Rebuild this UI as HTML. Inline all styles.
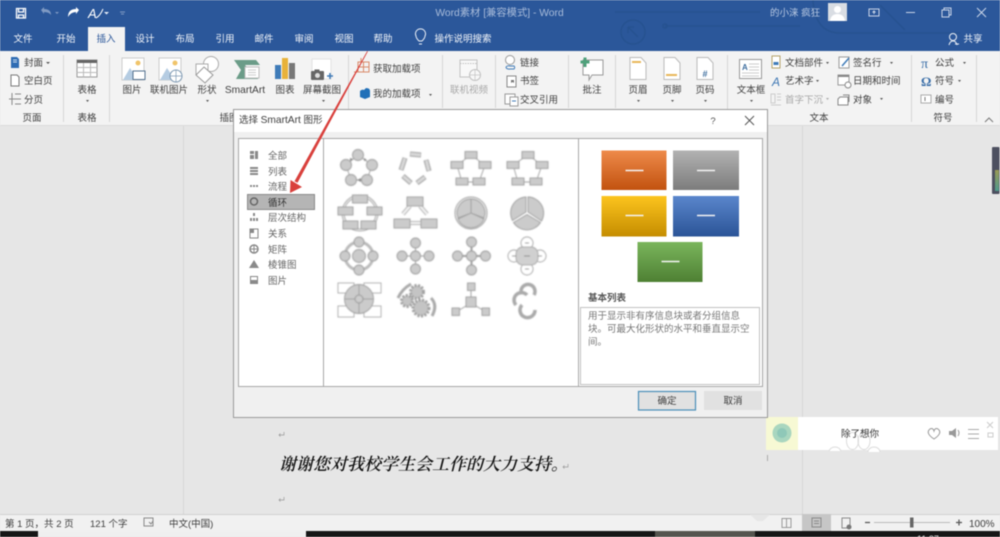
<!DOCTYPE html>
<html lang="zh"><head><meta charset="utf-8"><title>Word</title>
<style>
html,body{margin:0;padding:0;width:1000px;height:537px;overflow:hidden;background:#e6e6e6}
svg{display:block;filter:blur(.4px)}
text{font-family:"Liberation Sans","Noto Sans CJK SC",sans-serif;font-size:9.5px;fill:#3e3e3e}
.t{fill:#f2f5fa}
.m{text-anchor:middle}
.g{fill:#a8a8a8}
.d{fill:#555}
.l{fill:#666}
.s{fill:#cbcbcb;stroke:#9c9c9c;stroke-width:.9}
.n{fill:none;stroke:#a0a0a0;stroke-width:.9}
.i{fill:#fff;stroke:#999;stroke-width:.8}
</style></head><body>
<svg width="1000" height="537" viewBox="0 0 1000 537" xmlns="http://www.w3.org/2000/svg">
<defs>
<filter id="bl" x="-5%" y="-5%" width="110%" height="110%"><feGaussianBlur stdDeviation=".45"/></filter>
<linearGradient id="go" x1="0" y1="0" x2="0" y2="1"><stop offset="0" stop-color="#ee8a4a"/><stop offset="1" stop-color="#c2520f"/></linearGradient>
<linearGradient id="gg" x1="0" y1="0" x2="0" y2="1"><stop offset="0" stop-color="#b2b2b2"/><stop offset="1" stop-color="#7c7c7c"/></linearGradient>
<linearGradient id="gy" x1="0" y1="0" x2="0" y2="1"><stop offset="0" stop-color="#fcc41e"/><stop offset="1" stop-color="#c58d00"/></linearGradient>
<linearGradient id="gb" x1="0" y1="0" x2="0" y2="1"><stop offset="0" stop-color="#5a86cc"/><stop offset="1" stop-color="#2b5497"/></linearGradient>
<linearGradient id="gn" x1="0" y1="0" x2="0" y2="1"><stop offset="0" stop-color="#7ab55c"/><stop offset="1" stop-color="#4e8033"/></linearGradient>
<linearGradient id="gt" x1="0" y1="0" x2="0" y2="1"><stop offset="0" stop-color="#9a9a55"/><stop offset="1" stop-color="#4f9a8c"/></linearGradient>
</defs>

<rect width="1000" height="537" fill="#e6e6e6"/>
<!-- title bar -->
<rect width="1000" height="51" fill="#2b579a"/>
<g fill="none" stroke="#265290" stroke-width="1.500">
<path d="M615 12H760"/>
<circle cx="633" cy="32" r="12"/>
<path d="M628 27L638 37M628 27h6M628 27v6"/>
<path d="M665 26H800"/>
<path d="M813 0Q815 33 840 33H960"/>
<path d="M880 5L905 30"/>
<circle cx="665" cy="26" r="2"/>
</g>
<!-- QAT -->
<g fill="none" stroke="#fff" stroke-width="1.300">
<path d="M16.500 8.500H25.500V18H16.500Z"/><path d="M18.500 8.500V12H23.500V8.500M18.500 18V15H23.500V18"/>
</g>
<path d="M41 10L44 7V9Q51 9 51 15Q49 12 44 12V14Z" fill="#7f9ac3"/>
<path d="M55 12l2 2 2-2" fill="#7f9ac3"/>
<path d="M79 10L76 7V9Q68 9 68 17Q71 12 76 12V14Z" fill="#fff"/>
<text x="88" y="18" style="font-size:13px;fill:#fff;font-style:italic">A</text>
<path d="M96 18Q100 16 103 9" stroke="#fff" fill="none"/>
<path d="M104 12h5l-2.500 2.500z" fill="#e8eef7"/>
<path d="M120 12h5M121 14h3" stroke="#7f9ac3" fill="none"/>
<text class="m" x="499.500" y="16" style="fill:#a9bcda;font-size:10.300px">Word素材 [兼容模式] - Word</text>
<text x="770" y="16" style="fill:#b9c9e2">的小涞 疯狂</text>
<rect x="828" y="3" width="19" height="18" fill="#d9dde3"/>
<circle cx="837.500" cy="9.500" r="3.500" fill="#fff"/><path d="M830 21Q831 14 837.500 14Q844 14 845 21Z" fill="#fff"/>
<g fill="none" stroke="#c9d5e8" stroke-width="1">
<rect x="869" y="9" width="10" height="7"/><path d="M874 14V11M872.500 12.500L874 11L875.500 12.500"/>
<path d="M906 12.500H915"/>
<rect x="942" y="10" width="7" height="7"/><path d="M944 10V8H951V15H949"/>
<path d="M977 8L986 17M986 8L977 17"/>
</g>
<!-- tabs -->
<rect x="88" y="27" width="37" height="24" fill="#f3f3f3"/>
<g>
<text class="t m" x="23" y="42">文件</text>
<text class="t m" x="66" y="42">开始</text>
<text class="m" x="106" y="42" style="fill:#2b579a">插入</text>
<text class="t m" x="145" y="42">设计</text>
<text class="t m" x="185" y="42">布局</text>
<text class="t m" x="225" y="42">引用</text>
<text class="t m" x="264" y="42">邮件</text>
<text class="t m" x="304" y="42">审阅</text>
<text class="t m" x="344" y="42">视图</text>
<text class="t m" x="383" y="42">帮助</text>
<text class="t m" x="463" y="42">操作说明搜索</text>
<text class="t m" x="973" y="42">共享</text>
</g>
<g fill="none" stroke="#eef2f8" stroke-width="1">
<path d="M419 41Q416 38 416 36A5 5 0 1 1 425 36Q425 38 422 41ZM419 44H422"/>
<circle cx="953" cy="37" r="3.500"/><path d="M949 45Q950 41 953 41Q956 41 957 45M955 44h4"/>
</g>

<!-- ribbon -->
<rect y="51" width="1000" height="74" fill="#f3f3f3"/>
<rect y="125" width="1000" height="1" fill="#dcdcdc"/>
<g stroke="#d6d6d6" stroke-width="1">
<path d="M63.500 55V122M109.500 55V122M348.500 55V122M442.500 55V108M495.500 55V108M568.500 55V108M615.500 55V108M727.500 55V122M911.500 55V122M976.500 55V122"/>
</g>
<!-- page group -->
<path d="M11 57H17L19 59V68H11Z" fill="#2f6cb3"/><path d="M13 60h4M13 62h4" stroke="#cfe0f3"/>
<text x="24" y="66">封面</text><path d="M46 62h4l-2 2z" fill="#555"/>
<path d="M11 75H17L19 77V86H11Z" fill="#fff" stroke="#777"/>
<text x="24" y="84">空白页</text>
<path d="M12 93V105M9 99H21M15 94h6M15 104h6" fill="none" stroke="#888"/>
<text x="24" y="103">分页</text>
<text class="m" x="32" y="121">页面</text>
<!-- table -->
<rect x="77" y="60" width="20" height="17" fill="#fff" stroke="#999"/>
<rect x="77" y="60" width="20" height="3" fill="#666"/>
<path d="M77 67.500H97M77 72.500H97M83.500 63V77M90.500 63V77" stroke="#bbb"/>
<text class="m" x="87" y="93">表格</text><path d="M86 100h3l-1.500 2z" fill="#555"/>
<text class="m" x="87" y="121">表格</text>
<!-- picture -->
<rect x="122" y="58" width="22" height="22" fill="#fff" stroke="#ccc"/>
<circle cx="138" cy="63" r="2.500" fill="#f0c46a"/>
<path d="M123 80L130 68L138 80Z" fill="#b5cce2"/>
<rect x="133" y="71" width="12" height="8.500" fill="#fff" stroke="#53718f"/>
<text class="m" x="132" y="93">图片</text>
<rect x="159" y="58" width="22" height="22" fill="#fff" stroke="#ccc"/>
<circle cx="175" cy="63" r="2.500" fill="#f0c46a"/>
<path d="M160 80L167 68L175 80Z" fill="#b5cce2"/>
<circle cx="176" cy="76" r="6" fill="#fff" stroke="#7d98b2"/><path d="M170 76h12M176 70v12" stroke="#7d98b2" stroke-width=".7"/>
<text class="m" x="169" y="93">联机图片</text>
<circle cx="211" cy="64" r="7.500" fill="#fff" stroke="#aaa"/>
<path d="M196 64H208V74H196Z" fill="#fff" stroke="#aaa"/>
<path d="M204 67L213 75L205 83L196 75Z" fill="#fff" stroke="#999"/>
<text class="m" x="207" y="93">形状</text><path d="M206 100h3l-1.500 2z" fill="#555"/>
<path d="M234 60H256L260 65H245L250 71L246 77H258V79H236L241 70Z" fill="#6b9c88"/>
<rect x="245" y="67" width="14" height="11" fill="#fff" stroke="#bbb"/>
<path d="M248 70h8M248 72.500h8M248 75h8" stroke="#ccc"/>
<text class="m" x="245" y="93" style="font-size:10.200px">SmartArt</text>
<rect x="275" y="65" width="6" height="14" fill="#3f7bb8"/>
<rect x="282" y="58" width="6" height="21" fill="#e8b23a"/>
<rect x="289" y="63" width="6" height="16" fill="#777"/>
<text class="m" x="285" y="93">图表</text>
<rect x="312" y="59" width="19" height="20" fill="#fff" stroke="#e2e2e2"/>
<rect x="311" y="71" width="13" height="9" rx="1" fill="#666"/><circle cx="317.500" cy="75.500" r="2.500" fill="#ddd"/><rect x="314.500" y="69.500" width="5" height="2" fill="#666"/>
<path d="M327 76h6M330 73v6" stroke="#3f7bb8" stroke-width="1.500"/>
<text class="m" x="322" y="93">屏幕截图</text><path d="M322 100h3l-1.500 2z" fill="#555"/>
<text class="m" x="229" y="121">插图</text>
<!-- addins -->
<path d="M358 72V62H369V72ZM363.500 62V72M358 67H369M354 72H358M361 58V62" fill="none" stroke="#d98a6a"/>
<text x="373" y="72">获取加载项</text>
<path d="M360 91Q362 89 364 90L366 88Q370 88 370 91V97L365 99L360 97Z" fill="#2170b8"/>
<text x="373" y="97">我的加载项</text><path d="M429 94h3l-1.500 2z" fill="#555"/>
<!-- video -->
<rect x="460" y="60" width="17" height="17" fill="#f8f8f8" stroke="#c2c2c2"/><path d="M460 63.500h17" stroke="#c2c2c2" stroke-dasharray="1.500 1"/>
<circle cx="475" cy="75" r="5.500" fill="#f8f8f8" stroke="#c2c2c2"/><path d="M469.500 75h11M475 69.500v11" stroke="#c2c2c2" stroke-width=".7"/>
<text class="m g" x="469" y="93">联机视频</text>
<!-- links -->
<circle cx="510" cy="60" r="4.500" fill="#fff" stroke="#999"/><path d="M506 67a3 2 0 0 1 4-1h4a2 2 0 0 1 0 3h-4a3 2 0 0 1-4-2" fill="none" stroke="#3f7bb8"/>
<text x="520" y="66">链接</text>
<rect x="507" y="76" width="9" height="11" fill="#fff" stroke="#888"/><path d="M511 80h3v3l-1.500-1-1.500 1z" fill="#777"/>
<text x="520" y="84">书签</text>
<rect x="505" y="94" width="10" height="10" fill="#fff" stroke="#999"/><rect x="510" y="97" width="8" height="9" fill="#fff" stroke="#999"/><path d="M512 101h4" stroke="#3f7bb8"/>
<text x="520" y="103">交叉引用</text>
<!-- comment -->
<path d="M583 60H603V75H592L589 80V75H583Z" fill="#fff" stroke="#999"/>
<path d="M585 57.500V67M580.500 62H589.500" stroke="#4fa17b" stroke-width="3"/>
<text class="m" x="592" y="93">批注</text>
<!-- header/footer -->
<path d="M630 57.500H641L646 63V79.500H630Z" fill="#fff" stroke="#bbb"/><rect x="632" y="61" width="9" height="2" fill="#e8b75a"/>
<text class="m" x="638" y="93">页眉</text><path d="M637 100h3l-1.500 2z" fill="#555"/>
<path d="M664 57.500H675L680 63V79.500H664Z" fill="#fff" stroke="#bbb"/><rect x="666" y="74" width="11" height="2" fill="#e8b75a"/>
<text class="m" x="672" y="93">页脚</text><path d="M671 100h3l-1.500 2z" fill="#555"/>
<path d="M697 57.500H708L713 63V79.500H697Z" fill="#fff" stroke="#bbb"/>
<text class="m" x="705" y="77" style="fill:#3f6f9f;font-size:9px;font-weight:bold">#</text>
<text class="m" x="705" y="93">页码</text><path d="M704 100h3l-1.500 2z" fill="#555"/>
<!-- textbox -->
<rect x="739.500" y="59.500" width="22" height="19" fill="#fff" stroke="#999"/>
<text x="742" y="70" style="font-size:8px;font-weight:bold;fill:#3f6f9f">A</text>
<path d="M749 64h10M749 67h10M749 70h10M742 73h17M742 76h17" stroke="#ccc"/>
<text class="m" x="751" y="93">文本框</text><path d="M750 100h3l-1.500 2z" fill="#555"/>
<rect x="772" y="56" width="8" height="12" fill="#fff" stroke="#b5a26a"/><rect x="773.500" y="62" width="5" height="3" fill="#3f7bb8"/>
<text x="785" y="66">文档部件</text><path d="M826 62h3l-1.500 2z" fill="#555"/>
<text x="772" y="86" style="font-size:12px;font-style:italic;fill:#3f78b4">A</text>
<text x="785" y="84">艺术字</text><path d="M816 80h3l-1.500 2z" fill="#555"/>
<path d="M771 94h4v9h-4zM777 94h4M777 97h4M777 100h4M771 105h10" fill="none" stroke="#ccc"/>
<text x="785" y="103" class="g">首字下沉</text><path d="M826 98h3l-1.500 2z" fill="#aaa"/>
<rect x="839" y="57" width="10" height="11" fill="#fff" stroke="#999"/><path d="M842 66L849 58" stroke="#3f7bb8" stroke-width="1.500"/>
<text x="853" y="66">签名行</text><path d="M890 62h3l-1.500 2z" fill="#555"/>
<rect x="838" y="75" width="11" height="10" fill="#fff" stroke="#999"/><rect x="838" y="75" width="11" height="2" fill="#888"/><circle cx="848" cy="85" r="3" fill="#fff" stroke="#888"/>
<text x="853" y="84">日期和时间</text>
<path d="M840 97h8v8h-10v-6z" fill="#fff" stroke="#888"/><path d="M843 95h6v7" fill="none" stroke="#888"/>
<text x="853" y="103">对象</text><path d="M880 98h3l-1.500 2z" fill="#555"/>
<text class="m" x="819" y="121">文本</text>
<text x="921" y="68" style="font-size:14px;fill:#3a6ea8;font-family:'Liberation Serif',serif">π</text>
<text x="935" y="66">公式</text><path d="M963 62h3l-1.500 2z" fill="#555"/>
<text x="921" y="86" style="font-size:13px;font-weight:bold;fill:#3a6ea8;font-family:'Liberation Serif',serif">Ω</text>
<text x="935" y="84">符号</text><path d="M958 80h3l-1.500 2z" fill="#555"/>
<rect x="921" y="95" width="10" height="8" fill="#fff" stroke="#aaa"/><path d="M925 97v4" stroke="#777"/>
<text x="935" y="103">编号</text>
<text class="m" x="943" y="121">符号</text>
<path d="M985 122L989 118L993 122" fill="none" stroke="#777"/>

<!-- doc -->
<path d="M183.500 126V514M802.500 126V514" stroke="#d6d6d6"/>
<rect x="992" y="147" width="7.500" height="47" rx="1" fill="#4d5060"/>
<rect x="995" y="170" width="4" height="21" fill="url(#gt)"/>
<text x="279" y="470" style="font-family:'Liberation Serif','Noto Serif CJK SC',serif;font-size:17px;font-style:italic;font-weight:600;fill:#111">谢谢您对我校学生会工作的大力支持。</text>
<path d="M284 432V435H279M280.500 433.500L279 435L280.500 436.500M284 497V500H279M280.500 498.500L279 500L280.500 501.500M568 464V467H563M564.500 465.500L563 467L564.500 468.500" fill="none" stroke="#999" stroke-width=".7"/>

<!-- music widget -->
<rect x="766" y="417" width="232" height="33" fill="#fff"/>
<rect x="766" y="417" width="32" height="33" fill="#f7f9d4"/>
<circle cx="782" cy="433" r="9.500" fill="#a9d6bf"/><circle cx="782" cy="433" r="5" fill="#8fc8b8"/>
<g fill="#fff" stroke="#dcdcdc">
<path d="M829 451A6.500 6.500 0 0 1 841 451"/>
<ellipse cx="852.500" cy="441" rx="6" ry="8.500" fill="none"/><ellipse cx="864" cy="441" rx="6" ry="8.500" fill="none"/>
<path d="M868 452A6 5 0 0 1 880 452"/>
</g>
<text class="m" x="860" y="437" style="fill:#333">除了想你</text>
<path d="M934 439Q925 433 930 429Q933 427.500 934 431Q935 427.500 938 429Q943 433 934 439Z" fill="#fff" stroke="#999"/>
<path d="M949 431h3l4-3v10l-4-3h-3z" fill="#999"/><path d="M958 430q2 3 0 6" fill="none" stroke="#999"/>
<path d="M968 429.500h11M968 434h11M968 438.500h11" stroke="#aaa"/>
<path d="M987 422L993 428M993 422L987 428" stroke="#ccc"/>
<rect x="988" y="433" width="5" height="4" fill="none" stroke="#ccc"/>
<path d="M767.500 455V461" stroke="#aaa"/>

<!-- dialog -->
<rect x="233.500" y="109.500" width="534" height="308" fill="#f0f0f0" stroke="#9a9a9a"/>
<rect x="234" y="110" width="533" height="22" fill="#fff"/>
<text x="239" y="123">选择 <tspan style="font-size:10.200px">SmartArt</tspan> 图形</text>
<text class="m" x="713" y="124" style="fill:#555">?</text>
<path d="M745 116L754 125M754 116L745 125" stroke="#555" fill="none"/>
<rect x="238.500" y="138.500" width="524" height="248" fill="#fff" stroke="#a8a8a8"/>
<path d="M323.500 139V386M578.500 139V386" stroke="#a8a8a8"/>

<rect x="247.500" y="194.500" width="67" height="15" fill="#b5b5b5" stroke="#8a8a8a"/>
<text x="268" y="159" class="l">全部</text>
<text x="268" y="175" class="l">列表</text>
<text x="268" y="190" class="l">流程</text>
<text x="268" y="206" style="fill:#333">循环</text>
<text x="268" y="221" class="l">层次结构</text>
<text x="268" y="237" class="l">关系</text>
<text x="268" y="253" class="l">矩阵</text>
<text x="268" y="268" class="l">棱锥图</text>
<text x="268" y="284" class="l">图片</text>
<g fill="#8a8a8a">
<path d="M250 151h4v3h-4zM255 151h3v8h-3zM250 155h4v4h-4z"/>
<path d="M250 167h8v2h-8zM250 170h8v2h-8zM250 173h8v2h-8z"/>
<path d="M250 185h2v2h-2zM253 185h2v2h-2zM256 185h2v2h-2z"/>
<circle cx="254" cy="201.500" r="3.500" fill="none" stroke="#666" stroke-width="1.500"/>
<path d="M253 213h2v3h-2zM250 218h2v3h-2zM253 218h2v3h-2zM256 218h2v3h-2z"/>
<path d="M250 229h8v9h-8z" fill="none" stroke="#888"/><rect x="250" y="229" width="4" height="4"/>
<circle cx="254" cy="249" r="4" fill="none" stroke="#888" stroke-width="1.500"/><path d="M250 248.500h8v1h-8zM253.500 245h1v8h-1z"/>
<path d="M254 260L259 268H249Z"/>
<rect x="250.500" y="276.500" width="7" height="7" fill="#fff" stroke="#888"/><rect x="251" y="280" width="6" height="3"/>
</g>

<g filter="url(#bl)">
<!-- row 1 -->
<path d="M358 155L372 165L367 180H351L346 165Z" class="n"/>
<circle class="s" cx="358" cy="155" r="5.500"/><circle class="s" cx="372" cy="165" r="5.500"/><circle class="s" cx="367" cy="180" r="5.500"/><circle class="s" cx="351" cy="180" r="5.500"/><circle class="s" cx="346" cy="165" r="5.500"/>
<path d="M364 158l3 2-3 1zM350 158l3 1-3 2zM357 180l4-2v4z" fill="#888"/>
<g fill="none">
<g stroke="#a0a0a0" stroke-width="5"><path d="M410 154L421 155M426 160L429 171M425 177L417 183M411 183L403 176M401 170L405 158"/></g>
<g stroke="#d8d8d8" stroke-width="3"><path d="M410.500 154L420.500 155M426.300 160.500L428.700 170.500M424.600 177.300L417.400 182.700M410.600 182.600L403.400 176.400M401.200 169.500L404.800 158.500"/></g>
</g>
<path d="M471 155L485 165L479 182H462L457 165Z" class="n"/>
<rect class="s" x="465" y="151.500" width="12" height="7"/><rect class="s" x="479" y="161.500" width="12" height="7"/><rect class="s" x="473" y="178" width="12" height="7"/><rect class="s" x="456" y="178" width="12" height="7"/><rect class="s" x="451" y="161.500" width="12" height="7"/>
<path d="M528 155L542 165L536 182H518L513 165Z" class="n"/>
<rect class="s" x="522" y="151.500" width="12" height="7"/><rect class="s" x="536" y="161.500" width="12" height="7"/><rect class="s" x="530" y="178" width="12" height="7"/><rect class="s" x="512" y="178" width="12" height="7"/><rect class="s" x="507" y="161.500" width="12" height="7"/>
<!-- row 2 -->
<circle cx="360" cy="213" r="17" fill="none" stroke="#a0a0a0" stroke-width="3"/>
<circle cx="360" cy="213" r="17" fill="none" stroke="#e4e4e4" stroke-width="1.500"/>
<rect class="s" x="352.500" y="195" width="15" height="8"/><rect class="s" x="367" y="207" width="15" height="8"/><rect class="s" x="361" y="221" width="15" height="8"/><rect class="s" x="343" y="221" width="15" height="8"/><rect class="s" x="338" y="207" width="15" height="8"/>
<path d="M410 206L403 214M420 206L427 214M409 223H421" stroke="#a0a0a0" stroke-width="4" fill="none"/>
<path d="M410 206L403 214M420 206L427 214M409 223H421" stroke="#f0f0f0" stroke-width="2.500" fill="none"/>
<rect class="s" x="407" y="197" width="16" height="9"/><rect class="s" x="394" y="219" width="16" height="9"/><rect class="s" x="421" y="219" width="16" height="9"/>
<circle cx="471" cy="213" r="16" fill="#eee" stroke="#a0a0a0"/>
<path d="M471 213V199A14 14 0 0 1 484 218Z" class="s"/><path d="M471 213L484 219A14 14 0 0 1 458 219Z" class="s"/><path d="M471 213L458 218A14 14 0 0 1 471 199Z" class="s"/>
<path d="M528 212V197A16 16 0 0 1 541.500 221Z" class="s"/><path d="M527 214.500L540.500 222.500A16 16 0 0 1 513.500 222.500Z" class="s"/><path d="M526 212L512.500 220.500A16 16 0 0 1 526 197Z" class="s"/>
<!-- row 3 -->
<circle cx="359" cy="256" r="14" fill="none" stroke="#bcbcbc" stroke-width="3"/>
<circle class="s" cx="359" cy="256" r="6.500"/><circle class="s" cx="359" cy="242" r="5"/><circle class="s" cx="373" cy="256" r="5"/><circle class="s" cx="359" cy="270" r="5"/><circle class="s" cx="345" cy="256" r="5"/>
<path d="M415.500 243V268M402 256H429" stroke="#a0a0a0"/>
<circle class="s" cx="415.500" cy="256" r="5"/><circle class="s" cx="415.500" cy="243" r="5"/><circle class="s" cx="429" cy="256" r="5"/><circle class="s" cx="415.500" cy="269" r="5"/><circle class="s" cx="402" cy="256" r="5"/>
<path d="M471.500 242V270M458 256H486" stroke="#a0a0a0" stroke-width="2"/>
<circle class="s" cx="471.500" cy="256" r="5"/><circle class="s" cx="471.500" cy="242" r="5"/><circle class="s" cx="485.500" cy="256" r="5"/><circle class="s" cx="471.500" cy="270" r="5"/><circle class="s" cx="457.500" cy="256" r="5"/>
<circle class="n" style="fill:#fff" cx="527" cy="243" r="6"/><circle class="n" style="fill:#fff" cx="540" cy="256" r="6"/><circle class="n" style="fill:#fff" cx="527" cy="269" r="6"/><circle class="n" style="fill:#fff" cx="514" cy="256" r="6"/>
<rect x="516" y="247" width="22" height="18" rx="7" fill="#d0d0d0" stroke="#a8a8a8"/>
<path d="M524 256h6M525 243h4M525 269h4M512 256h4M538 256h4" stroke="#888"/>
<!-- row 4 -->
<rect class="i" x="338" y="283" width="16" height="10"/><rect class="i" x="364" y="283" width="17" height="10"/><rect class="i" x="338" y="306" width="16" height="11"/><rect class="i" x="364" y="306" width="17" height="11"/>
<circle class="s" cx="359" cy="299" r="14.500"/><path d="M359 284.500V313.500M344.500 299H373.500" stroke="#a0a0a0"/><circle cx="359" cy="299" r="4" fill="#ccc" stroke="#999"/>
<circle cx="417" cy="292" r="6.500" fill="#c4c4c4" stroke="#a0a0a0" stroke-width="3" stroke-dasharray="2 1.500"/>
<circle cx="407" cy="301" r="5.500" fill="#c4c4c4" stroke="#a0a0a0" stroke-width="3" stroke-dasharray="2 1.500"/>
<circle cx="421" cy="308" r="8" fill="#c4c4c4" stroke="#a0a0a0" stroke-width="3" stroke-dasharray="2 1.500"/>
<path d="M398 298Q402 289 411 284M431 298Q438 305 432 316" fill="none" stroke="#aaa" stroke-width="3"/>
<path d="M471 287V303M471 303L456 312M471 303L486 312" stroke="#a0a0a0"/>
<rect class="s" x="467.500" y="283" width="7.500" height="7.500"/><rect class="s" x="466" y="297" width="10" height="10"/><rect class="s" x="452" y="308" width="7.500" height="7.500"/><rect class="s" x="482" y="308" width="7.500" height="7.500"/>
<path d="M521 291A7 7 0 1 1 534 295M516 305A7 7 0 0 1 527 295M522 305A7.500 7.500 0 1 0 535 310" fill="none" stroke="#aaa" stroke-width="3.500"/>
</g>

<!-- preview -->
<rect x="601.500" y="150.500" width="65" height="39.500" fill="url(#go)"/>
<rect x="673" y="150.500" width="66" height="39.500" fill="url(#gg)"/>
<rect x="601.500" y="196" width="65" height="40.500" fill="url(#gy)"/>
<rect x="673" y="196" width="66" height="40.500" fill="url(#gb)"/>
<rect x="637.500" y="242" width="65" height="40" fill="url(#gn)"/>
<path d="M625.500 170.500H643.500M697 170.500H715M625.500 215.500H643.500M697 215.500H715M661.500 261.500H679.500" stroke="#f4f4f4" stroke-width="1.500"/>
<text x="588" y="301" style="font-weight:bold;fill:#555">基本列表</text>
<rect x="580.500" y="307.500" width="179" height="77" fill="#fff" stroke="#c2c2c2"/>
<text x="588" y="319" style="fill:#777">用于显示非有序信息块或者分组信息</text>
<text x="588" y="332" style="fill:#777">块。可最大化形状的水平和垂直显示空</text>
<text x="588" y="345" style="fill:#777">间。</text>
<rect x="638.500" y="391.500" width="57" height="18.500" fill="#e1e1e1" stroke="#4a8fb8" stroke-width="1.200"/>
<text class="m" x="667" y="404">确定</text>
<rect x="704" y="391" width="58" height="19" fill="#e1e1e1"/>
<text class="m" x="733" y="404">取消</text>

<!-- red arrow -->
<path d="M367.200 51L367.900 51.400L338.900 105.500L297.500 182.800L294.500 181.200L337.100 104.500Z" fill="#d9403c"/>
<path d="M290 193L290.500 180L302 187Z" fill="#d9403c"/>

<!-- status -->
<rect y="514" width="1000" height="17" fill="#f1f1f1"/>
<rect y="514" width="1000" height="1" fill="#d0d0d0"/>
<path d="M750 514.500H770L763 521H757Z" fill="#e6e6e6"/>
<text x="5" y="527">第 1 页，共 2 页</text>
<text x="90" y="527">121 个字</text>
<rect x="144" y="518" width="9" height="8" fill="none" stroke="#888"/><path d="M149 522l2 2 2-3" fill="none" stroke="#888"/>
<text x="169" y="527">中文(中国)</text>
<path d="M782 518.500H791V527.500H782ZM786.500 518.500V527.500" fill="none" stroke="#999"/>
<rect x="802" y="514" width="29" height="17" fill="#c6c6c6"/>
<rect x="812" y="518" width="9" height="9" fill="none" stroke="#888"/><path d="M814 521h5M814 523.500h5" stroke="#888"/>
<rect x="842" y="518" width="8" height="10" fill="none" stroke="#888"/><circle cx="849" cy="527" r="2.500" fill="#777"/>
<path d="M865 522.500H870M956 522.500H962M959 519.500V525.500" stroke="#555" stroke-width="1.200"/>
<path d="M874 522.500H950" stroke="#bbb"/>
<rect x="910" y="517.500" width="3.500" height="10" fill="#666"/>
<text x="969" y="527" style="font-size:10px">100%</text>

<!-- bottom strip -->
<rect y="531" width="1000" height="6" fill="#161616"/>
<rect x="38" y="531" width="268" height="6" fill="#efefef"/>
<rect x="655" y="531" width="100" height="6" fill="#55554f"/>
<text x="917" y="542" style="font-size:9px;fill:#ddd">11:37</text>
</svg>
</body></html>
